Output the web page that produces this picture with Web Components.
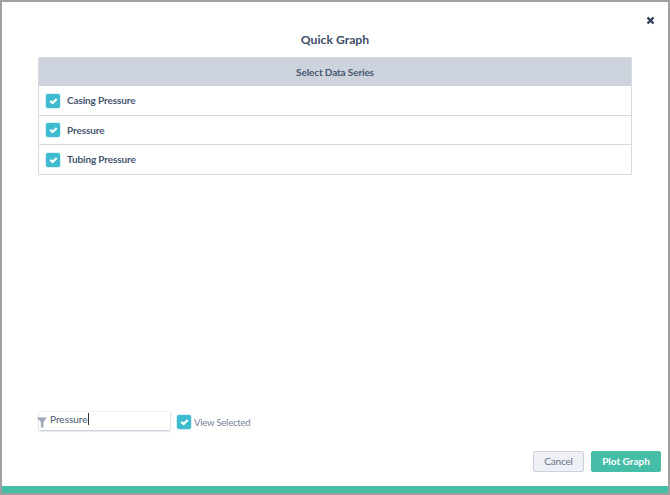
<!DOCTYPE html>
<html>
<head>
<meta charset="utf-8">
<style>
html, body { margin: 0; padding: 0; background: #fff; }
body { font-family: "Lato", "Liberation Sans", sans-serif; }
</style>
</head>
<body>
<quick-graph-dialog>
  <series-row>Casing Pressure</series-row>
  <series-row>Pressure</series-row>
  <series-row>Tubing Pressure</series-row>
</quick-graph-dialog>
<script>
const TICK = `<svg width="9" height="8" viewBox="0 0 9 8"><path d="M1.3 3.9 L3.6 6 L7.7 2" fill="none" stroke="#fff" stroke-width="2.3"/></svg>`;

class CheckBox extends HTMLElement {
    constructor() {
        super();
        this.attachShadow({ mode: "open" });
        this.shadowRoot.innerHTML = `
      <style>
        :host { display:flex; align-items:center; justify-content:center; flex:none;
                width:14px; height:14px; background:#3dbccf; border-radius:2px;
                box-shadow:0 0 0 1px #d8f0f4; }
      </style>${TICK}`;
    }
}

class SeriesRow extends HTMLElement {
    constructor() {
        super();
        this.attachShadow({ mode: "open" });
        this.shadowRoot.innerHTML = `
      <style>
        :host { display:flex; align-items:center; gap:7px; height:28px; padding-left:7px;
                border-top:1px solid #d5dae3; font-size:10px; font-weight:700; color:#46566f;
                letter-spacing:-.13px; }
        :host(:first-child) { border-top:0; height:29px; }
        :host(:last-child) { height:29px; }
        :host(:first-child) .t, :host(:last-child) .t { padding-bottom:2px; }
      </style>
      <check-box></check-box><span class="t"><slot></slot></span>`;
    }
}

class QuickGraphDialog extends HTMLElement {
    constructor() {
        super();
        this.attachShadow({ mode: "open" });
        this.shadowRoot.innerHTML = `
      <style>
        :host { display:flex; flex-direction:column; box-sizing:border-box; width:670px; height:495px;
                border:2px solid #a0a0a0; background:#fff; color:#3b4c68; }
        .close { display:flex; justify-content:flex-end; height:15px; padding:14px 13px 0 0; }
        h1 { margin:-1px 0 0; height:27px; font-size:12.2px; line-height:20px; font-weight:700;
             text-align:center; color:#3b4c68; }
        .table { flex:none; margin:0 36px; border:1px solid #d5dae3; border-radius:1px; }
        .head { height:28px; background:#cdd3dd; font-size:10px; font-weight:700; line-height:28px;
                text-align:center; color:#46566f; letter-spacing:-.13px; }
        .spacer { flex:1; }
        .filter { display:flex; align-items:center; gap:7px; padding-left:37px; height:22px; margin-bottom:4px; }
        .input { position:relative; box-sizing:border-box; width:131px; height:18px; padding-left:11px;
                 margin-top:-2px; box-shadow:0 1px 2px #bcc3cf, 0 0 2px #d8dce3; font-size:10px;
                 line-height:15px; color:#46566f; }
        .input svg { position:absolute; left:-2px; top:5px; }
        .caret { display:inline-block; width:1px; height:12px; background:#333; vertical-align:-2px; }
        .view { display:flex; align-items:center; gap:3px; font-size:9.5px; letter-spacing:-.2px; color:#76839a; }
        .buttons { display:flex; justify-content:flex-end; gap:7px; padding:14px 7px 0 0; height:21px; }
        .btn { box-sizing:border-box; height:21px; border-radius:2px; font-size:10px; line-height:19px;
               text-align:center; }
        .cancel { width:51px; background:#eef0f5; border:1px solid #ccd1db; color:#64728a; letter-spacing:-.2px; }
        .plot { width:70px; background:#46bea7; border:1px solid #46bea7; color:#fff; font-weight:700; }
        .bar { height:7px; margin-top:14px; background:#46bea7; }
      </style>
      <div class="close">
        <svg width="9" height="9" viewBox="0 0 9 9"><path d="M1.5 1.5 L7.5 7.5 M7.5 1.5 L1.5 7.5" stroke="#2f3d55" stroke-width="2.4"/></svg>
      </div>
      <h1>Quick Graph</h1>
      <div class="table">
        <div class="head">Select Data Series</div>
        <slot></slot>
      </div>
      <div class="spacer"></div>
      <div class="filter">
        <div class="input">
          <svg width="11" height="11" viewBox="0 0 11 11"><path d="M0 0.5 H10 L6.4 5 V10.5 H3.9 V5 Z" fill="#9aa5b5"/></svg>
          Pressure<span class="caret"></span>
        </div>
        <div class="view"><check-box></check-box><span>View Selected</span></div>
      </div>
      <div class="buttons">
        <div class="btn cancel">Cancel</div>
        <div class="btn plot">Plot Graph</div>
      </div>
      <div class="bar"></div>`;
    }
}

customElements.define("check-box", CheckBox);
customElements.define("series-row", SeriesRow);
customElements.define("quick-graph-dialog", QuickGraphDialog);
</script>
</body>
</html>
